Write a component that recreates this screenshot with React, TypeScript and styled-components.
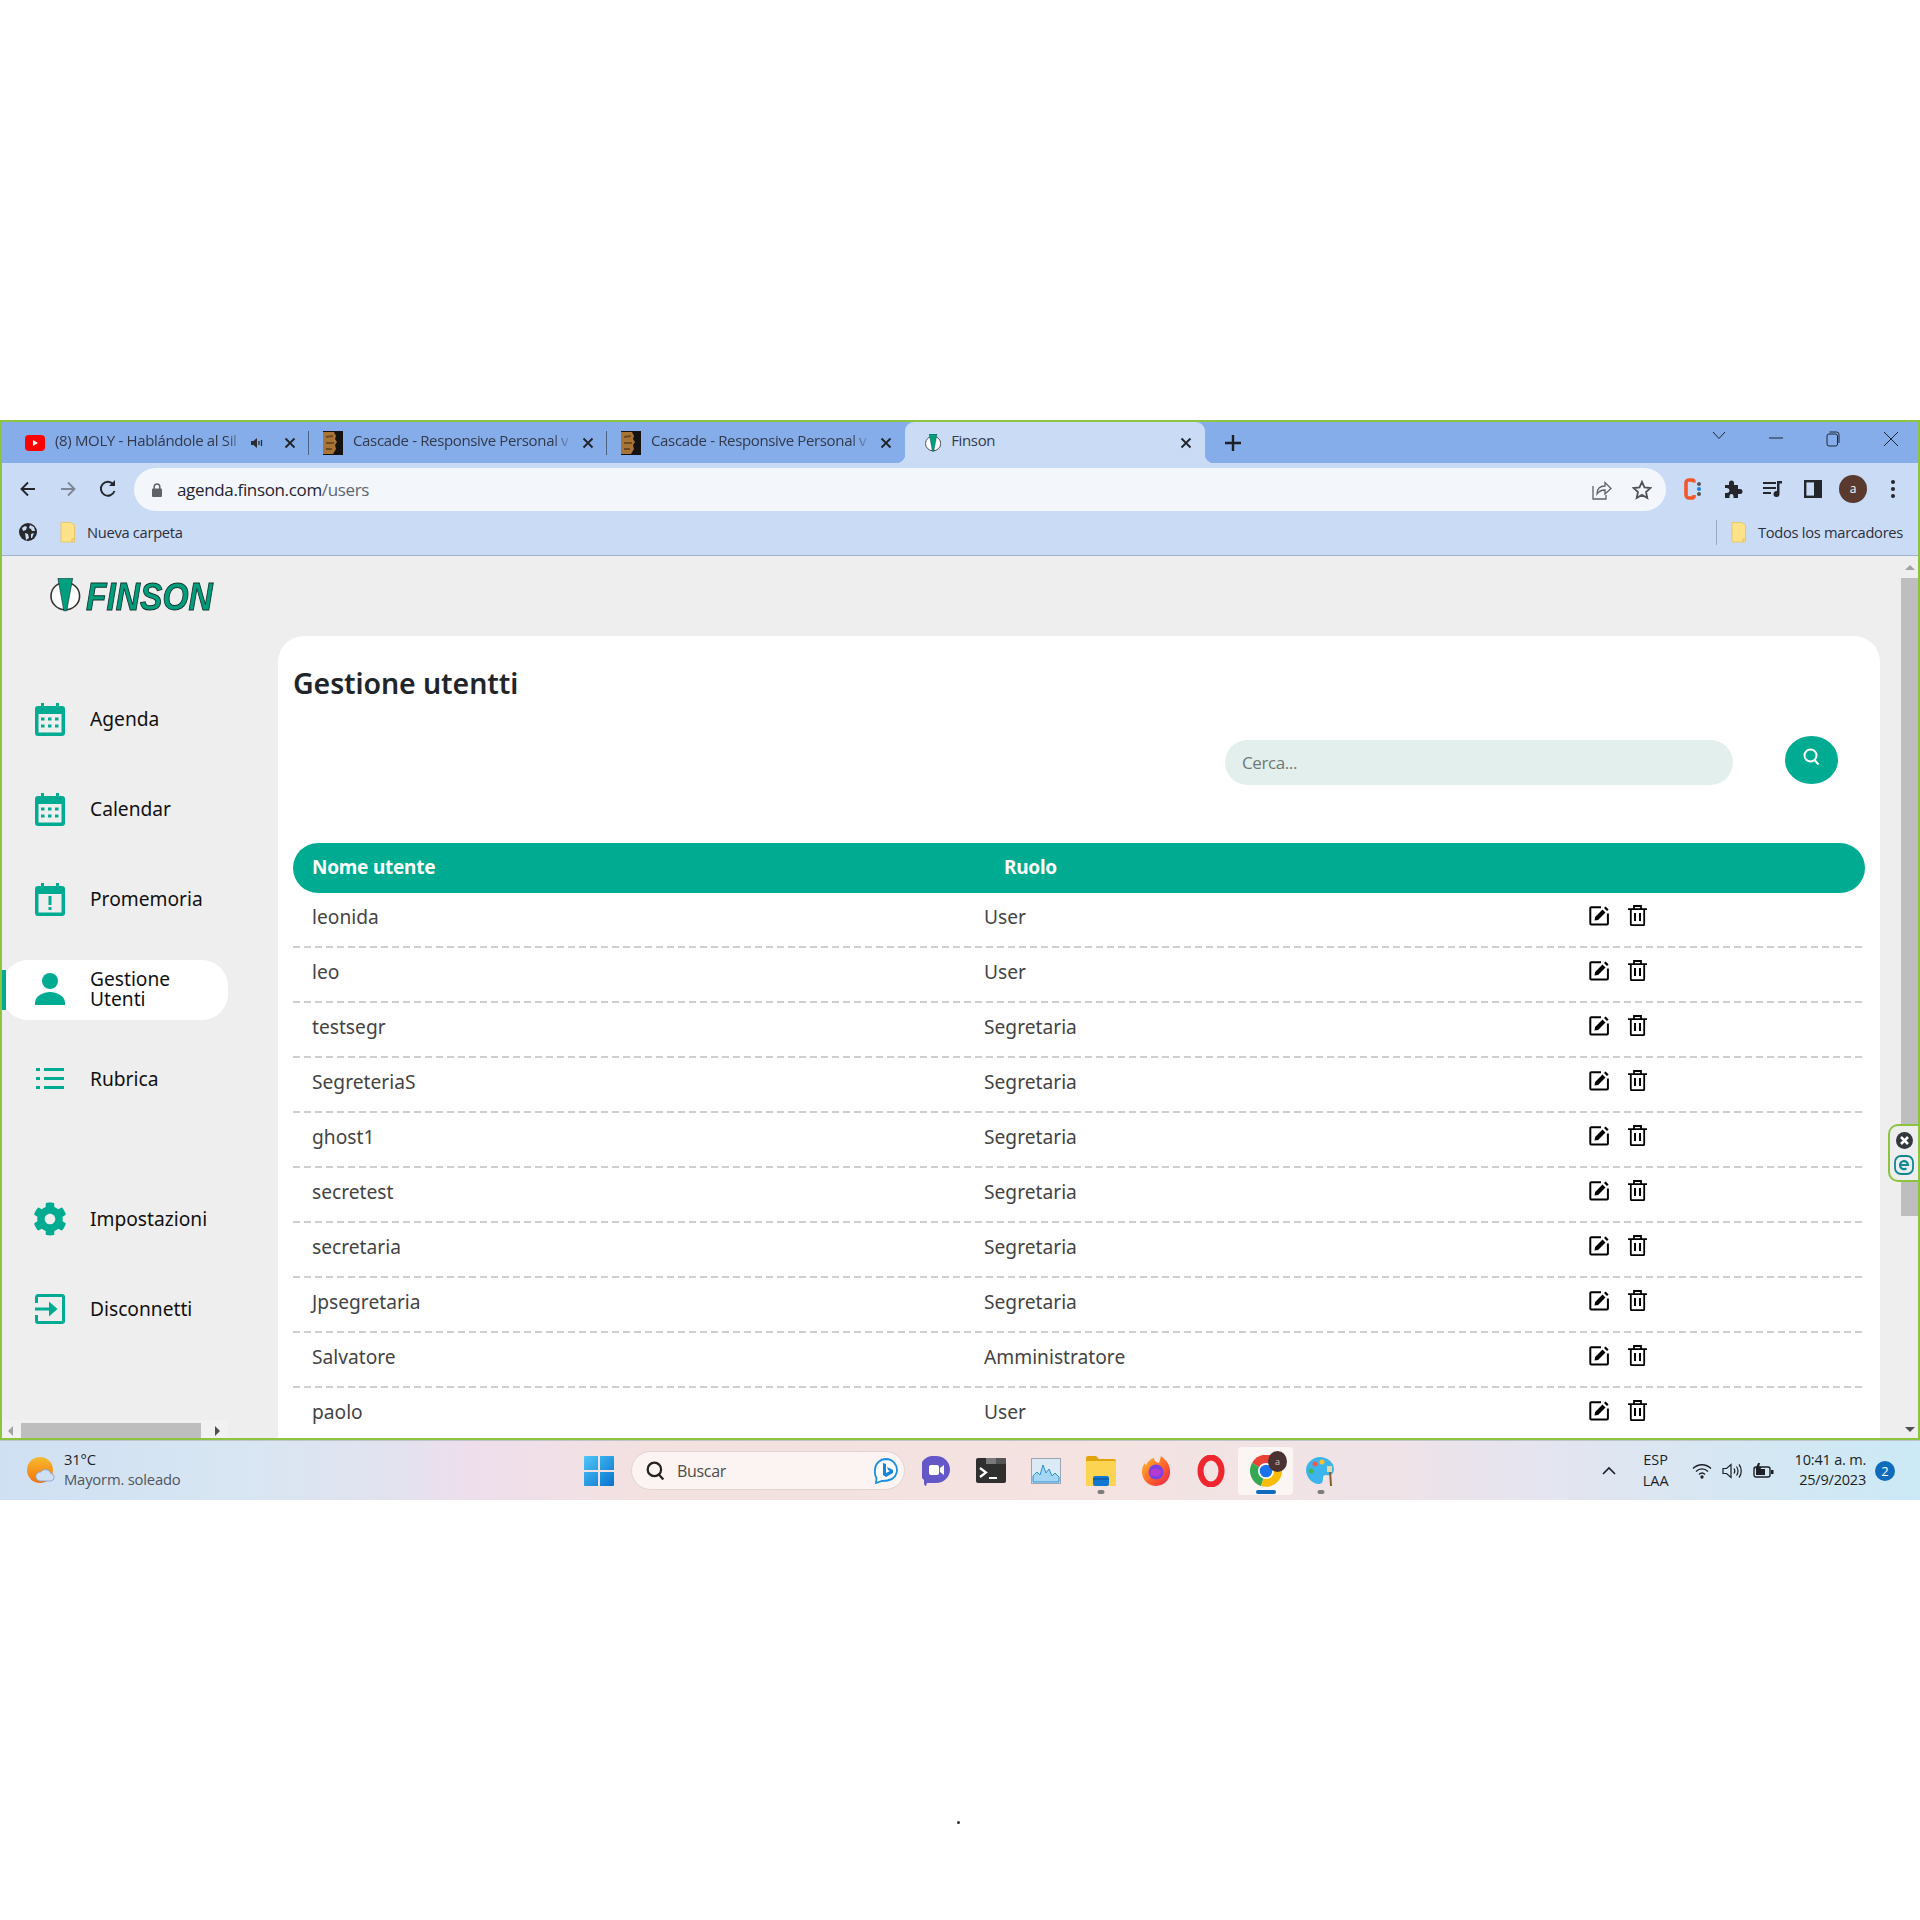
import React from "react";
import styled, { createGlobalStyle } from "styled-components";
import { FaCog } from "react-icons/fa";

const TEAL = "#00AC91";
const GREEN = "#8CC440";
const UI = `"Open Sans", "Noto Sans", sans-serif`;
const APP = `"Noto Sans", "Open Sans", sans-serif`;

const Global = createGlobalStyle`
  html, body { margin: 0; padding: 0; background: #fff; }
  * { box-sizing: border-box; }
`;

const Page = styled.div`
  width: 1920px;
  height: 1920px;
  overflow: hidden;
  background: #fff;
  display: flex;
  flex-direction: column;
  padding-top: 420px;
`;

const Window = styled.div`
  position: relative;
  height: 1020px;
  border: 2px solid ${GREEN};
  display: flex;
  flex-direction: column;
  flex: none;
  overflow: hidden;
`;

const TabStrip = styled.div`
  height: 41px;
  flex: none;
  background: #85ade9;
  display: flex;
  align-items: stretch;
  padding-left: 9px;
  font-family: ${UI};
`;

const Tab = styled.div<{ $active?: boolean }>`
  position: relative;
  width: ${(p) => (p.$active ? "300px" : "298px")};
  display: flex;
  align-items: center;
  padding: 0 11px 0 ${(p) => (p.$active ? "20px" : "14px")};
  background: ${(p) => (p.$active ? "#cadbf5" : "transparent")};
  border-radius: ${(p) => (p.$active ? "9px 9px 0 0" : "0")};
  &::before, &::after {
    content: ${(p) => (p.$active ? '""' : "none")};
    position: absolute;
    bottom: 0;
    width: 9px;
    height: 9px;
  }
  &::before { left: -9px; background: radial-gradient(circle at 0 0, transparent 9px, #cadbf5 9.5px); }
  &::after { right: -9px; background: radial-gradient(circle at 100% 0, transparent 9px, #cadbf5 9.5px); }
`;

const Divider = styled.span`
  position: absolute;
  right: 0;
  top: 9px;
  height: 24px;
  width: 1px;
  background: #4a6386;
`;

const TabTitle = styled.span<{ $fade?: boolean }>`
  flex: 1;
  margin-left: 10px;
  margin-top: -5px;
  font-size: 15px;
  letter-spacing: -0.35px;
  color: #33394a;
  white-space: nowrap;
  ${(p) => p.$fade && `mask-image: linear-gradient(to right, #000 88%, transparent 97%);`}
`;

const MuteSlot = styled.span`
  display: flex;
  margin-right: 18px;
`;

const WinControls = styled.div`
  margin-left: auto;
  display: flex;
  align-items: flex-start;
  padding-top: 9px;
  padding-right: 19px;
  gap: 43px;
`;

const PlusButton = styled.div`
  margin-left: 20px;
  display: flex;
  align-items: center;
`;

const Toolbar = styled.div`
  height: 50px;
  flex: none;
  background: #cadbf5;
  display: flex;
  align-items: flex-start;
  padding: 5px 5px 0 6px;
`;

const ToolSlot = styled.div`
  width: 40px;
  height: 41px;
  flex: none;
  display: flex;
  align-items: center;
  justify-content: center;
`;

const Omnibox = styled.div`
  flex: 1;
  height: 43px;
  margin: 0 7px 0 6px;
  background: #f3f7fc;
  border-radius: 22px;
  display: flex;
  align-items: center;
  padding: 0 14px 0 17px;
  font-family: ${UI};
  font-size: 17px;
  letter-spacing: -0.35px;
  color: #1f2430;
`;

const UrlText = styled.span`
  margin-left: 14px;
  flex: 1;
  margin-top: -1px;
`;

const UrlPath = styled.span`
  color: #5f6672;
`;

const OmniIcons = styled.div`
  display: flex;
  gap: 20px;
  align-items: center;
`;

const BookmarkBar = styled.div`
  height: 43px;
  flex: none;
  background: #cadbf5;
  border-bottom: 1px solid #a6b2cd;
  display: flex;
  align-items: center;
  padding: 0 15px 4px 17px;
  font-family: ${UI};
  font-size: 14.7px;
  letter-spacing: -0.3px;
  color: #2a3040;
`;

const BookmarkLabel = styled.span`
  margin-left: 12px;
`;

const GlobeGap = styled.span`
  width: 23px;
`;

const BookmarkEnd = styled.div`
  margin-left: auto;
  display: flex;
  align-items: center;
  height: 25px;
  border-left: 1px solid #9aa7bd;
  padding-left: 14px;
`;

const AppArea = styled.div`
  flex: 1;
  min-height: 0;
  display: flex;
  background: #eeeeee;
  font-family: ${APP};
`;

const Sidebar = styled.aside`
  width: 276px;
  flex: none;
  display: flex;
  flex-direction: column;
`;

const LogoRow = styled.div`
  height: 134px;
  flex: none;
  display: flex;
  align-items: flex-start;
  padding: 22px 0 0 48px;
`;

const LogoText = styled.span`
  display: inline-block;
  margin-left: 5px;
  margin-top: -3px;
  font-family: "Liberation Sans", sans-serif;
  font-weight: 700;
  font-style: italic;
  font-size: 39px;
  line-height: 44px;
  color: #009e7c;
  -webkit-text-stroke: 1px #12332c;
  transform: scaleX(0.86);
  transform-origin: left center;
`;

const Nav = styled.nav`
  width: 226px;
  flex: 1;
  display: flex;
  flex-direction: column;
`;

const NavGroup = styled.div`
  display: flex;
  flex-direction: column;
  gap: 30px;
  margin-bottom: 80px;
`;

const NavItem = styled.div<{ $active?: boolean }>`
  position: relative;
  height: 60px;
  display: flex;
  align-items: center;
  padding: 0 0 2px 33px;
  border-radius: 26px;
  background: ${(p) => (p.$active ? "#fff" : "transparent")};
  color: #111;
  font-size: 19.2px;
  line-height: 20px;
  &::before {
    content: ${(p) => (p.$active ? '""' : "none")};
    position: absolute;
    left: 0;
    top: 10px;
    width: 4px;
    height: 40px;
    background: ${TEAL};
  }
`;

const NavIconBox = styled.span`
  width: 30px;
  height: 34px;
  flex: none;
  display: flex;
  align-items: center;
  justify-content: center;
  color: ${TEAL};
  margin-right: 25px;
  svg { flex: none; }
`;

const HScroll = styled.div`
  width: 226px;
  height: 20px;
  flex: none;
  margin-top: auto;
  background: #f1f1f1;
  display: flex;
  align-items: flex-end;
  padding-left: 19px;
  position: relative;
`;

const HThumb = styled.div`
  width: 180px;
  height: 17px;
  background: #bebebe;
`;

const ArrowLeft = styled.span`
  position: absolute;
  left: 6px;
  bottom: 4px;
  border: 5px solid transparent;
  border-left: 0;
  border-right-color: #a3a3a3;
`;

const ArrowRight = styled.span`
  position: absolute;
  left: 213px;
  bottom: 4px;
  border: 5px solid transparent;
  border-right: 0;
  border-left-color: #505050;
`;

const Card = styled.main`
  width: 1602px;
  flex: none;
  margin-top: 80px;
  background: #fff;
  border-radius: 26px 26px 0 0;
  padding: 0 15px;
  overflow: hidden;
`;

const Title = styled.h1`
  margin: 28px 0 0;
  font-size: 28.5px;
  line-height: 38px;
  font-weight: 600;
  color: #212529;
  letter-spacing: -0.1px;
`;

const SearchRow = styled.div`
  display: flex;
  align-items: flex-start;
  margin-top: 34px;
  margin-left: 932px;
  height: 107px;
`;

const SearchInput = styled.div`
  width: 508px;
  height: 45px;
  margin-top: 4px;
  border-radius: 23px;
  background: #e3efec;
  display: flex;
  align-items: center;
  padding: 0 17px;
  font-family: "Open Sans", sans-serif;
  font-size: 17px;
  letter-spacing: -0.4px;
  color: #6f7a78;
`;

const SearchButton = styled.div`
  width: 53px;
  height: 48px;
  margin-left: 52px;
  border-radius: 50%;
  background: ${TEAL};
  display: flex;
  align-items: flex-start;
  justify-content: center;
  padding-top: 12px;
`;

const TableHead = styled.div`
  height: 50px;
  border-radius: 25px;
  background: ${TEAL};
  color: #fff;
  font-size: 19px;
  font-weight: 700;
  display: grid;
  grid-template-columns: 692px 1fr;
  align-items: center;
  padding: 0 0 3px 19px;
  letter-spacing: -0.25px;
`;

const Row = styled.div`
  height: 55px;
  display: grid;
  grid-template-columns: 672px 605px 1fr;
  align-items: center;
  padding: 0 0 8px 19px;
  font-size: 19.2px;
  color: #444;
  background: repeating-linear-gradient(90deg, #cfcfcf 0 7px, transparent 7px 11px) left bottom / 100% 2px no-repeat;
`;

const Actions = styled.div`
  display: flex;
  gap: 18px;
  margin-top: -2px;
  align-items: center;
`;

const Gutter = styled.div`
  width: 21px;
  flex: none;
`;

const VScroll = styled.div`
  width: 17px;
  flex: none;
  display: flex;
  flex-direction: column;
  align-items: center;
  background: #eeeeee;
`;

const VThumb = styled.div`
  width: 17px;
  height: 638px;
  background: #bebebe;
`;

const ArrowUp = styled.span`
  margin: 9px 0 8px;
  border: 5px solid transparent;
  border-top: 0;
  border-bottom-color: #a3a3a3;
`;

const ArrowDown = styled.span`
  margin-top: auto;
  margin-bottom: 6px;
  border: 5px solid transparent;
  border-bottom: 0;
  border-top-color: #505050;
`;

const EsetWidget = styled.div`
  position: absolute;
  right: -2px;
  top: 702px;
  width: 32px;
  height: 58px;
  background: #eeeeee;
  border: 2px solid ${GREEN};
  border-right: 0;
  border-radius: 10px 0 0 10px;
  display: flex;
  flex-direction: column;
  align-items: center;
  justify-content: center;
  gap: 6px;
  padding-right: 2px;
`;

const Taskbar = styled.footer`
  height: 60px;
  flex: none;
  position: relative;
  display: flex;
  align-items: center;
  border-top: 1px solid #bfc4c8;
  background: linear-gradient(90deg, #cfe0f2 0, #d8e6f3 240px, #e3e2ef 400px, #eedeec 470px, #f3e1e0 640px, #f4e3e1 1100px, #efe3e8 1400px, #e6e4ef 1520px, #d6e7f3 1720px, #cce9f6 1920px);
  font-family: ${UI};
  color: #1c1f26;
`;

const Weather = styled.div`
  display: flex;
  align-items: center;
  width: 584px;
  padding-left: 27px;
  flex: none;
`;

const WeatherText = styled.div`
  margin-left: 9px;
  margin-top: -3px;
  display: flex;
  flex-direction: column;
  font-size: 14.8px;
  line-height: 20px;
  letter-spacing: -0.2px;
`;

const WeatherSub = styled.span`
  color: #4f5660;
`;

const Search = styled.div`
  width: 274px;
  height: 39px;
  margin-left: 17px;
  flex: none;
  border-radius: 20px;
  background: #fbf4f2;
  border: 1px solid #e2d3d0;
  display: flex;
  align-items: center;
  padding: 0 6px 0 14px;
  font-size: 16px;
  letter-spacing: -0.3px;
  color: #4c4c4c;
`;

const SearchLabel = styled.span`
  margin-left: 12px;
  flex: 1;
`;

const TaskIcons = styled.div`
  display: flex;
  align-items: center;
  margin-left: 3px;
`;

const TaskSlot = styled.div<{ $active?: boolean }>`
  position: relative;
  width: 55px;
  height: 48px;
  flex: none;
  display: flex;
  align-items: center;
  justify-content: center;
  border-radius: 4px;
  background: ${(p) => (p.$active ? "#fbf5f4" : "transparent")};
`;

const TaskDot = styled.span<{ $active?: boolean }>`
  position: absolute;
  bottom: 1px;
  left: 50%;
  transform: translateX(-50%);
  width: ${(p) => (p.$active ? "20px" : "7px")};
  height: 3.5px;
  border-radius: 2px;
  background: ${(p) => (p.$active ? "#0f6cbd" : "#7d7d7d")};
`;

const Tray = styled.div`
  margin-left: auto;
  display: flex;
  align-items: center;
  padding-right: 25px;
  font-size: 14.5px;
`;

const Lang = styled.div`
  margin-left: 23px;
  margin-top: -2px;
  display: flex;
  flex-direction: column;
  align-items: center;
  line-height: 21px;
  width: 32px;
`;

const TrayIcons = styled.div`
  margin-left: 20px;
  display: flex;
  align-items: center;
  gap: 10px;
`;

const Clock = styled.div`
  margin-left: 21px;
  margin-top: -2px;
  display: flex;
  flex-direction: column;
  align-items: flex-end;
  font-size: 14.5px;
  line-height: 20px;
  letter-spacing: -0.2px;
`;

const Badge = styled.div`
  margin-left: 9px;
  width: 20px;
  height: 20px;
  border-radius: 50%;
  background: #0f6cbd;
  color: #fff;
  font-size: 13px;
  display: flex;
  align-items: center;
  justify-content: center;
`;

const Below = styled.div`
  flex: 1;
  display: flex;
  justify-content: center;
  padding-top: 321px;
  padding-right: 4px;
`;

const Speck = styled.span`
  width: 3px;
  height: 3px;
  background: #333;
  border-radius: 50%;
`;

/* ---------- drawings ---------- */
const Close = () => (
  <svg width="16" height="16" viewBox="0 0 16 16"><path d="M3.5 3.5l9 9M12.5 3.5l-9 9" stroke="#22262e" strokeWidth="1.9" /></svg>
);
const YouTube = () => (
  <svg width="20" height="16" viewBox="0 0 20 16"><rect width="20" height="16" rx="4" fill="#f00" /><path d="M8 5l5 3-5 3z" fill="#fff" /></svg>
);
const Cascade = () => (
  <svg width="20" height="24" viewBox="0 0 20 24">
    <rect width="20" height="24" fill="#15120f" />
    <path d="M0 1h11l2 4-1 3 2 3-2 3 1 4-3 5H0z" fill="#a87536" />
    <path d="M3 6l7-1M3 12l8 0M3 18l6 0" stroke="#6d4a22" strokeWidth="2" />
  </svg>
);
const LogoMark = ({ size = 34 }: { size?: number }) => (
  <svg width={size * 0.9} height={size} viewBox="0 0 31 34">
    <ellipse cx="15.5" cy="18" rx="14.5" ry="14" fill="#fff" stroke="#333" strokeWidth="1.6" />
    <path d="M8 0h15l-6 33h-3z" fill="#00a07e" stroke="#123" strokeWidth="0.6" />
  </svg>
);
const Volume = () => (
  <svg width="14" height="14" viewBox="0 0 14 14"><path d="M1 5h2.5L7 2v10L3.5 9H1z" fill="#2a2d33" /><path d="M9 5v4M11.5 4v6" stroke="#2a2d33" strokeWidth="1.3" /></svg>
);

const ArrowSvg = styled.svg<{ $flip?: boolean }>`
  transform: ${(p) => (p.$flip ? "scaleX(-1)" : "none")};
`;
const Arrow = ({ flip, color }: { flip?: boolean; color: string }) => (
  <ArrowSvg $flip={flip} width="20" height="20" viewBox="0 0 20 20">
    <path d="M17 10H4M10 3.5L3.5 10l6.5 6.5" fill="none" stroke={color} strokeWidth="1.9" />
  </ArrowSvg>
);

const Calendar = ({ alert }: { alert?: boolean }) => (
  <svg width="30" height="33" viewBox="0 0 30 33" fill="currentColor">
    <path fillRule="evenodd" d="M6 0h3v3h12V0h3v3h3a3 3 0 0 1 3 3v24a3 3 0 0 1-3 3H3a3 3 0 0 1-3-3V6a3 3 0 0 1 3-3h3zM3.5 11v18.5h23V11z" />
    {alert ? (
      <path d="M13.5 13h3v9h-3zM13.5 24h3v3h-3z" />
    ) : (
      <path d="M6 14.5h3.5v3H6zM13 14.5h3.5v3H13zM20 14.5h3.5v3H20zM6 21.5h3.5v3H6zM13 21.5h3.5v3H13zM20 21.5h3.5v3H20z" />
    )}
  </svg>
);
const Person = () => (
  <svg width="30" height="33" viewBox="0 0 30 33" fill="currentColor">
    <circle cx="15" cy="8" r="8" />
    <path d="M0 32v-2C0 23 8 19 15 19s15 4 15 11v2z" />
  </svg>
);
const ListIcon = () => (
  <svg width="28" height="22" viewBox="0 0 28 22" fill="currentColor">
    <path d="M0 0h4v3H0zM8 0h20v3H8zM0 9h4v3H0zM8 9h20v3H8zM0 18h4v3H0zM8 18h20v3H8z" />
  </svg>
);
const LogIn = () => (
  <svg width="30" height="30" viewBox="0 0 30 30" fill="none" stroke="currentColor">
    <path d="M1.5 9V3a1.5 1.5 0 0 1 1.5-1.5h24A1.5 1.5 0 0 1 28.5 3v24a1.5 1.5 0 0 1-1.5 1.5H3A1.5 1.5 0 0 1 1.5 27v-6" strokeWidth="3" />
    <path d="M0 15h20" strokeWidth="3" />
    <path d="M14 7.5l8.5 7.5-8.5 7.5z" fill="currentColor" stroke="none" />
  </svg>
);
const EditIcon = () => (
  <svg width="21" height="21" viewBox="0 0 21 21">
    <path d="M12 2.2H2.3a1 1 0 0 0-1 1v15.4a1 1 0 0 0 1 1h15.6a1 1 0 0 0 1-1V8.5" fill="none" stroke="#000" strokeWidth="2" />
    <path d="M5.5 15.5l.6-3.6 7.4-7.4 3 3-7.4 7.4zM15 3l1.6-1.6 3 3L18 6z" fill="#000" />
  </svg>
);
const TrashIcon = () => (
  <svg width="19" height="21" viewBox="0 0 19 21" fill="none" stroke="#000" strokeWidth="1.8">
    <path d="M0 4.2h19M6 4V1h7v3M2.8 4.2v15a1 1 0 0 0 1 1h11.4a1 1 0 0 0 1-1v-15" />
    <path d="M7 8v8M12 8v8" strokeWidth="2" />
  </svg>
);
const Magnifier = ({ color = "#fff", size = 17 }: { color?: string; size?: number }) => (
  <svg width={size} height={size} viewBox="0 0 17 17" fill="none" stroke={color} strokeWidth="2">
    <circle cx="7.5" cy="7.5" r="6" /><path d="M11.5 12l4 4.5" />
  </svg>
);
const Folder = ({ w = 15, h = 21 }: { w?: number; h?: number }) => (
  <svg width={w} height={h} viewBox="0 0 15 21"><path d="M1 .5h9.5L14.5 3v17H1z" fill="#fde28a" stroke="#e7c76a" /><path d="M12 20v-3h2.5" fill="none" stroke="#e2bd5a" /></svg>
);
const Globe = () => (
  <svg width="18" height="18" viewBox="0 0 18 18">
    <circle cx="9" cy="9" r="9" fill="#26282c" />
    <path d="M3 5l3-2 2 1-1 3-3 1zM11 2l4 2 1 4-3 0-1-2-2-1zM6 10l3 1 1 4-3 2zM12 11l3-1-2 5-1 0z" fill="#cadbf5" />
  </svg>
);
const Share = () => (
  <svg width="20" height="20" viewBox="0 0 20 20" fill="none" stroke="#5f6368" strokeWidth="1.3">
    <path d="M1 6v13h13v-4" /><path d="M5 14c0-5 3-8 8-8V2.5l6 6-6 5.5V10c-4 0-6 1-8 4z" />
  </svg>
);
const Star = () => (
  <svg width="20" height="20" viewBox="0 0 20 20" fill="none" stroke="#50545a" strokeWidth="1.8"><path d="M10 1.8l2.5 5.6 6 .6-4.5 4 1.3 6-5.3-3.1-5.3 3.1 1.3-6-4.500-4 6-.6z" /></svg>
);
const CExt = () => (
  <svg width="20" height="22" viewBox="0 0 20 22">
    <path d="M11 4.5V4a2 2 0 0 0-2-2H6a3 3 0 0 0-3 3v12a3 3 0 0 0 3 3h3a2 2 0 0 0 2-2v-1" fill="none" stroke="#f4572b" strokeWidth="3.6" />
    <circle cx="16" cy="6" r="2" fill="#555" /><circle cx="16" cy="11" r="2" fill="#1a7fe0" /><circle cx="16" cy="16" r="2" fill="#555" />
  </svg>
);
const Puzzle = () => (
  <svg width="20" height="20" viewBox="0 0 20 20" fill="#24262b">
    <path d="M2 6h4V4a2.5 2.5 0 0 1 5 0v2h4v4h2a2.5 2.5 0 0 1 0 5h-2v4h-4.5v-2a2 2 0 0 0-4 0v2H2v-5h2a2.5 2.5 0 0 0 0-5H2z" />
  </svg>
);
const Media = () => (
  <svg width="20" height="20" viewBox="0 0 20 20" fill="#24262b">
    <path d="M0 3h13v2H0zM0 8h13v2H0zM0 13h8v2H0z" /><path d="M14 2h5v2.5h-2.5V15a3 3 0 1 1-2.5-3z" />
  </svg>
);
const SidePanel = () => (
  <svg width="18" height="18" viewBox="0 0 18 18"><rect x="1.2" y="1.2" width="15.6" height="15.6" fill="none" stroke="#24262b" strokeWidth="2.4" /><rect x="10" y="1" width="7" height="16" fill="#24262b" /></svg>
);
const Avatar = styled.div`
  width: 28px;
  height: 28px;
  border-radius: 50%;
  background: #5a3a2e;
  color: #fff;
  font: 12px ${UI};
  display: flex;
  align-items: center;
  justify-content: center;
`;
const Dots = () => (
  <svg width="6" height="20" viewBox="0 0 6 20" fill="#24262b"><circle cx="3" cy="3" r="2" /><circle cx="3" cy="10" r="2" /><circle cx="3" cy="17" r="2" /></svg>
);
const Chevron = () => (
  <svg width="14" height="9" viewBox="0 0 14 9" fill="none" stroke="#1f2733"><path d="M1 1l6 6.5L13 1" /></svg>
);
const Minimize = () => <svg width="14" height="14" viewBox="0 0 14 14"><path d="M0 7h14" stroke="#1f2733" /></svg>;
const Restore = () => (
  <svg width="14" height="16" viewBox="0 0 14 16" fill="none" stroke="#1f2733"><rect x="1" y="3" width="10.5" height="12" rx="2" /><path d="M3.5 1h7A2.5 2.5 0 0 1 13 3.5V12" /></svg>
);
const WinClose = () => (
  <svg width="16" height="16" viewBox="0 0 16 16" stroke="#1f2733"><path d="M1 1l14 14M15 1L1 15" /></svg>
);
const Plus = () => <svg width="16" height="16" viewBox="0 0 16 16"><path d="M8 0v16M0 8h16" stroke="#1d2026" strokeWidth="2.4" /></svg>;
const Lock = () => (
  <svg width="12" height="14" viewBox="0 0 12 14"><rect x="1" y="5.5" width="10" height="8.5" rx="1" fill="#5f6368" /><path d="M3.2 6V3.8a2.8 2.8 0 0 1 5.600 0V6" fill="none" stroke="#5f6368" strokeWidth="1.5" /></svg>
);
const EsetX = () => (
  <svg width="17" height="17" viewBox="0 0 17 17"><circle cx="8.5" cy="8.5" r="8.5" fill="#33383d" /><path d="M5 5l7 7M12 5l-7 7" stroke="#fff" strokeWidth="2.6" /></svg>
);
const EsetE = () => (
  <svg width="20" height="20" viewBox="0 0 20 20" fill="none" stroke="#0f8790"><rect x="1" y="1" width="18" height="18" rx="6" strokeWidth="1.8" /><path d="M6 10h8a4 4 0 1 0-1.5 3.3" strokeWidth="2.2" /></svg>
);
const WeatherIcon = () => (
  <svg width="28" height="28" viewBox="0 0 28 28">
    <defs><linearGradient id="sun" x1="0" y1="0" x2="0" y2="1"><stop offset="0" stopColor="#f5bb2e" /><stop offset="1" stopColor="#f5730f" /></linearGradient></defs>
    <circle cx="13" cy="13" r="13" fill="url(#sun)" />
    <path d="M13 24a4.5 4.5 0 0 1 .5-9 6 6 0 0 1 10.5 1.5 3.8 3.8 0 0 1 0 7.5z" fill="#cfe0f5" stroke="#7f9cc7" strokeWidth=".8" />
  </svg>
);
const WinLogo = () => (
  <svg width="30" height="30" viewBox="0 0 30 30">
    <defs><linearGradient id="wl" x1="0" y1="0" x2="1" y2="1"><stop offset="0" stopColor="#4fc6f7" /><stop offset="1" stopColor="#0672ce" /></linearGradient></defs>
    <path d="M0 1a1 1 0 0 1 1-1h13v14H0zM16 0h13a1 1 0 0 1 1 1v13H16zM0 16h14v14H1a1 1 0 0 1-1-1zM16 16h14v13a1 1 0 0 1-1 1H16z" fill="url(#wl)" />
  </svg>
);
const Bing = () => (
  <svg width="24" height="26" viewBox="0 0 24 26">
    <path d="M12 1a11 11 0 0 1 10.5 14C21 21 15 23 8 23l-6 2 .5-5A12 12 0 0 1 1 12 11 11 0 0 1 12 1z" fill="#fff" stroke="#1a8fe3" strokeWidth="1.8" />
    <path d="M9 5l3 1v9l4-2-2-1-1-3 6 3v3l-7 4-3-2z" fill="#1583d8" />
  </svg>
);
const MeetIcon = () => (
  <svg width="28" height="30" viewBox="0 0 28 30">
    <path d="M14 0c8 0 14 6 14 13.5S22 27 14 27H5l-1 3c-2 0-2-3-2-6A14 14 0 0 1 14 0z" fill="#6458c9" />
    <rect x="7" y="9" width="10" height="10" rx="2" fill="#fff" /><path d="M18 12l4-3v10l-4-3z" fill="#fff" />
  </svg>
);
const Terminal = () => (
  <svg width="30" height="25" viewBox="0 0 30 25">
    <rect width="30" height="25" rx="2" fill="#2f2f2f" /><rect x="10" width="10" height="6" fill="#7a7a7a" /><rect x="20" width="10" height="6" rx="1" fill="#555" />
    <path d="M4 10l6 4.5-6 4.5" fill="none" stroke="#fff" strokeWidth="2.2" /><path d="M13 20h8" stroke="#fff" strokeWidth="2" />
  </svg>
);
const PerfMon = () => (
  <svg width="30" height="26" viewBox="0 0 30 26">
    <rect x=".5" y=".5" width="29" height="25" fill="#dbeaf5" stroke="#9aa7b3" />
    <path d="M2 24v-6l4-4 3 3 3-10 3 8 3-4 3 7 3-3 4 4v5z" fill="#a5d6f3" stroke="#2c8fd8" />
  </svg>
);
const TaskFolder = () => (
  <svg width="30" height="30" viewBox="0 0 30 30">
    <path d="M0 2a2 2 0 0 1 2-2h8l3 3h15a2 2 0 0 1 2 2v5H0z" fill="#e2a40c" /><rect y="5" width="30" height="25" rx="1" fill="#fdd451" />
    <rect x="7" y="20" width="16" height="10" rx="2" fill="#1177d0" /><path d="M7 23h16" stroke="#0b4f8f" />
  </svg>
);
const Firefox = () => (
  <svg width="28" height="30" viewBox="0 0 28 30">
    <defs><linearGradient id="ff" x1="0" y1="0" x2="1" y2="1"><stop offset="0" stopColor="#ffc02e" /><stop offset=".6" stopColor="#ff5a2c" /><stop offset="1" stopColor="#e51e5a" /></linearGradient></defs>
    <path d="M14 30A14 14 0 0 1 0 16c0-4 1-7 3-9l1 3c1-4 4-7 8-8 0 3 2 4 5 5l2-7c4 3 9 8 9 15a14 14 0 0 1-14 15z" fill="url(#ff)" />
    <circle cx="14" cy="16" r="7.5" fill="#7542e5" /><path d="M8 15c3-3 9-3 12 1-2 5-8 6-12 2z" fill="#b43ad0" />
  </svg>
);
const Opera = () => (
  <svg width="28" height="32" viewBox="0 0 28 32"><ellipse cx="14" cy="16" rx="10.5" ry="13.5" fill="none" stroke="#f0262f" strokeWidth="6" /></svg>
);
const Chrome = () => (
  <svg width="32" height="32" viewBox="0 0 32 32">
    <path d="M16 16L2 8a16 16 0 0 1 28 0z" fill="#ea4335" />
    <path d="M16 16L2 8a16 16 0 0 0 9 23z" fill="#34a853" />
    <path d="M16 16l-5 15A16 16 0 0 0 30 8z" fill="#fbbc05" />
    <circle cx="16" cy="16" r="8" fill="#fff" /><circle cx="16" cy="16" r="6.3" fill="#1a73e8" />
  </svg>
);
const ProfileBadge = styled.span`
  position: absolute;
  right: 6px;
  top: 4px;
  width: 19px;
  height: 21px;
  border-radius: 50%;
  background: #4a3330;
  color: #d8c6bd;
  font-size: 9px;
  display: flex;
  align-items: center;
  justify-content: center;
`;
const Palette = () => (
  <svg width="30" height="30" viewBox="0 0 30 30">
    <path d="M14 1c7 0 14 5 14 12 0 6-5 7-8 6-2 0-3 1-3 3s0 6-4 6C6 28 0 21 0 14S7 1 14 1z" fill="#3bb5ec" />
    <circle cx="9" cy="8" r="2.5" fill="#ef5a4c" /><circle cx="16" cy="6" r="2.5" fill="#f8c12c" /><circle cx="5" cy="15" r="2.5" fill="#42b649" />
    <path d="M23 14l2 1 1 15h-2z" fill="#8a5a2b" /><rect x="21" y="10" width="5" height="6" fill="#e9d6a6" />
  </svg>
);
const Caret = () => <svg width="16" height="10" viewBox="0 0 16 10" fill="none" stroke="#1c1f26" strokeWidth="1.6"><path d="M2 8l6-6 6 6" /></svg>;
const Wifi = () => (
  <svg width="20" height="16" viewBox="0 0 20 16" fill="none" stroke="#1c1f26" strokeWidth="1.3">
    <path d="M1 5.5c5-5 13-5 18 0M4 8.5c3.5-3.5 8.500-3.5 12 0M7 11.5c2-2 4-2 6 0" /><circle cx="10" cy="14" r="1" fill="#1c1f26" />
  </svg>
);
const Speaker = () => (
  <svg width="21" height="16" viewBox="0 0 21 16" fill="none" stroke="#1c1f26" strokeWidth="1.2">
    <path d="M1 5.5h3.5L9 1.5v13l-4.5-4H1z" /><path d="M12 5.5c1 1.5 1 3.5 0 5M14.5 3.5c2 2.5 2 6.5 0 9M17 1.500c3 3.5 3 9.5 0 13" />
  </svg>
);
const Battery = () => (
  <svg width="21" height="16" viewBox="0 0 21 16">
    <rect x="1" y="4" width="16" height="10" rx="2" fill="none" stroke="#1c1f26" strokeWidth="1.4" /><rect x="3" y="6" width="9" height="6" fill="#1c1f26" />
    <rect x="18" y="7" width="2.5" height="4" fill="#1c1f26" /><path d="M5 0L2.5 6h3L4 10l5-6H6l1-4z" fill="#1c1f26" />
  </svg>
);

const users: [string, string][] = [
  ["leonida", "User"],
  ["leo", "User"],
  ["testsegr", "Segretaria"],
  ["SegreteriaS", "Segretaria"],
  ["ghost1", "Segretaria"],
  ["secretest", "Segretaria"],
  ["secretaria", "Segretaria"],
  ["Jpsegretaria", "Segretaria"],
  ["Salvatore", "Amministratore"],
  ["paolo", "User"],
];

export default function App() {
  return (
    <Page>
      <Global />
      <Window>
        <TabStrip>
          <Tab>
            <YouTube />
            <TabTitle $fade>(8) MOLY - Hablándole al Sil</TabTitle>
            <MuteSlot><Volume /></MuteSlot>
            <Close />
            <Divider />
          </Tab>
          <Tab>
            <Cascade />
            <TabTitle $fade>Cascade - Responsive Personal v</TabTitle>
            <Close />
            <Divider />
          </Tab>
          <Tab>
            <Cascade />
            <TabTitle $fade>Cascade - Responsive Personal v</TabTitle>
            <Close />
          </Tab>
          <Tab $active>
            <LogoMark size={18} />
            <TabTitle>Finson</TabTitle>
            <Close />
          </Tab>
          <PlusButton><Plus /></PlusButton>
          <WinControls>
            <Chevron />
            <Minimize />
            <Restore />
            <WinClose />
          </WinControls>
        </TabStrip>
        <Toolbar>
          <ToolSlot><Arrow color="#24262b" /></ToolSlot>
          <ToolSlot><Arrow flip color="#7d8697" /></ToolSlot>
          <ToolSlot>
            <svg width="20" height="20" viewBox="0 0 20 20" fill="none" stroke="#24262b" strokeWidth="1.9">
              <path d="M16.5 12a7 7 0 1 1-1-6.5" /><path d="M17 1v6h-6z" fill="#24262b" stroke="none" />
            </svg>
          </ToolSlot>
          <Omnibox>
            <Lock />
            <UrlText>agenda.finson.com<UrlPath>/users</UrlPath></UrlText>
            <OmniIcons><Share /><Star /></OmniIcons>
          </Omnibox>
          <ToolSlot><CExt /></ToolSlot>
          <ToolSlot><Puzzle /></ToolSlot>
          <ToolSlot><Media /></ToolSlot>
          <ToolSlot><SidePanel /></ToolSlot>
          <ToolSlot><Avatar>a</Avatar></ToolSlot>
          <ToolSlot><Dots /></ToolSlot>
        </Toolbar>
        <BookmarkBar>
          <Globe />
          <GlobeGap />
          <Folder />
          <BookmarkLabel>Nueva carpeta</BookmarkLabel>
          <BookmarkEnd>
            <Folder />
            <BookmarkLabel>Todos los marcadores</BookmarkLabel>
          </BookmarkEnd>
        </BookmarkBar>
        <AppArea>
          <Sidebar>
            <LogoRow>
              <LogoMark />
              <LogoText>FINSON</LogoText>
            </LogoRow>
            <Nav>
              <NavGroup>
                <NavItem><NavIconBox><Calendar /></NavIconBox>Agenda</NavItem>
                <NavItem><NavIconBox><Calendar /></NavIconBox>Calendar</NavItem>
                <NavItem><NavIconBox><Calendar alert /></NavIconBox>Promemoria</NavItem>
                <NavItem $active><NavIconBox><Person /></NavIconBox><span>Gestione<br />Utenti</span></NavItem>
                <NavItem><NavIconBox><ListIcon /></NavIconBox>Rubrica</NavItem>
              </NavGroup>
              <NavGroup>
                <NavItem><NavIconBox><FaCog size={34} /></NavIconBox>Impostazioni</NavItem>
                <NavItem><NavIconBox><LogIn /></NavIconBox>Disconnetti</NavItem>
              </NavGroup>
              <HScroll>
                <ArrowLeft />
                <HThumb />
                <ArrowRight />
              </HScroll>
            </Nav>
          </Sidebar>
          <Card>
            <Title>Gestione utentti</Title>
            <SearchRow>
              <SearchInput>Cerca...</SearchInput>
              <SearchButton><Magnifier /></SearchButton>
            </SearchRow>
            <TableHead>
              <span>Nome utente</span>
              <span>Ruolo</span>
            </TableHead>
            {users.map(([name, role]) => (
              <Row key={name}>
                <span>{name}</span>
                <span>{role}</span>
                <Actions><EditIcon /><TrashIcon /></Actions>
              </Row>
            ))}
          </Card>
          <Gutter />
          <VScroll>
            <ArrowUp />
            <VThumb />
            <ArrowDown />
          </VScroll>
        </AppArea>
        <EsetWidget><EsetX /><EsetE /></EsetWidget>
      </Window>
      <Taskbar>
        <Weather>
          <WeatherIcon />
          <WeatherText>
            <span>31°C</span>
            <WeatherSub>Mayorm. soleado</WeatherSub>
          </WeatherText>
        </Weather>
        <WinLogo />
        <Search>
          <Magnifier color="#222" size={19} />
          <SearchLabel>Buscar</SearchLabel>
          <Bing />
        </Search>
        <TaskIcons>
          <TaskSlot><MeetIcon /></TaskSlot>
          <TaskSlot><Terminal /></TaskSlot>
          <TaskSlot><PerfMon /></TaskSlot>
          <TaskSlot><TaskFolder /><TaskDot /></TaskSlot>
          <TaskSlot><Firefox /></TaskSlot>
          <TaskSlot><Opera /></TaskSlot>
          <TaskSlot $active><Chrome /><ProfileBadge>a</ProfileBadge><TaskDot $active /></TaskSlot>
          <TaskSlot><Palette /><TaskDot /></TaskSlot>
        </TaskIcons>
        <Tray>
          <Caret />
          <Lang><span>ESP</span><span>LAA</span></Lang>
          <TrayIcons><Wifi /><Speaker /><Battery /></TrayIcons>
          <Clock><span>10:41 a. m.</span><span>25/9/2023</span></Clock>
          <Badge>2</Badge>
        </Tray>
      </Taskbar>
      <Below><Speck /></Below>
    </Page>
  );
}
